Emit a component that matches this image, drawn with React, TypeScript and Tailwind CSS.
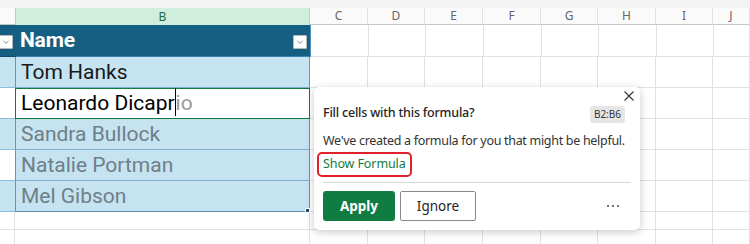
import React from "react";

const COLS = ["C", "D", "E", "F", "G", "H", "I", "J"];
const WIDTHS = ["w-[58px]", "w-[57px]", "w-[58px]", "w-[58px]", "w-[57px]", "w-[58px]", "w-[57px]", "flex-1"];

function PlainCells({ h }: { h: string }) {
  return (
    <>
      {COLS.map((c, i) => (
        <div key={c} className={`${WIDTHS[i]} ${h} shrink-0 border-r border-b border-[#e1e1e1] bg-white`} />
      ))}
    </>
  );
}

function Dropdown() {
  return (
    <div className="w-[14px] h-[14px] bg-white border border-[#b8b8b8] rounded-[1px] flex items-center justify-center">
      <svg width="8" height="6" viewBox="0 0 8 6">
        <path d="M1.5 2 L4 4.3 L6.5 2" fill="none" stroke="#7a7a7a" strokeWidth="0.9" />
      </svg>
    </div>
  );
}

const rows = [
  { a: "bg-[#c5e3f1]", text: "Tom Hanks", color: "text-[#1a1a1a]", active: false },
  { a: "bg-white", text: "Leonardo Dicapr", color: "text-black", active: true },
  { a: "bg-[#c5e3f1]", text: "Sandra Bullock", color: "text-[#6f7f88]", active: false },
  { a: "bg-white", text: "Natalie Portman", color: "text-[#6f7f88]", active: false },
  { a: "bg-[#c5e3f1]", text: "Mel Gibson", color: "text-[#6f7f88]", active: false },
];

export default function App() {
  return (
    <div className="relative w-[750px] h-[244px] overflow-hidden bg-white" style={{ fontFamily: "Roboto, 'Noto Sans', sans-serif" }}>
      {/* top band */}
      <div className="h-[8px] bg-[#f3f3f3]" />
      {/* column headers */}
      <div className="flex h-[17px]">
        <div className="w-[16px] shrink-0 bg-[#fafafa] border-r border-b border-[#c6c6c6]" />
        <div className="w-[294px] shrink-0 bg-[#cfeedd] border-r border-[#a9d8bd] flex items-center justify-center text-[12px] text-[#1e6b40]" style={{ fontFamily: "'Noto Sans', sans-serif" }}>B</div>
        {COLS.map((c, i) => (
          <div key={c} className={`${WIDTHS[i]} shrink-0 bg-[#fafafa] border-r border-b border-[#e1e1e1] border-b-[#c6c6c6] flex items-center justify-center text-[12px] text-[#666]`} style={{ fontFamily: "'Noto Sans', sans-serif" }}>{c}</div>
        ))}
      </div>
      {/* row 1 header */}
      <div className="flex h-[32px]">
        <div className="w-[16px] shrink-0 bg-[#156082] border-b border-[#0f4c69] flex items-center pt-[2px]">
          <div className="-ml-[1px]"><Dropdown /></div>
        </div>
        <div className="w-[294px] shrink-0 bg-[#156082] border-b border-[#3c84a8] flex items-center justify-between pl-[4px] pr-[3px]">
          <span className="text-white font-bold text-[21px] leading-none tracking-[-0.2px]">Name</span>
          <div className="mt-[3px]"><Dropdown /></div>
        </div>
        <div className="w-[1px] shrink-0 h-full bg-[#4e93c2]" />
        <div className="flex flex-1">
          <PlainCells h="h-[32px]" />
        </div>
      </div>
      {/* data rows */}
      {rows.map((r, idx) => (
        <div key={idx} className="flex h-[31px]">
          <div className={`w-[15px] shrink-0 ${r.a} border-b border-[#8ebcd6]`} />
          <div
            className={`w-[295px] shrink-0 flex items-center pl-[5px] pt-[1px] ${
              r.active ? "bg-white border border-[#107c41]" : "bg-[#c5e3f1] border-b border-[#7eb1cf] border-l border-l-[#6d94ab] border-r border-r-[#6d94ab]"
            } ${idx === 4 ? "border-b-[#5f8aa3]" : ""}`}
          >
            <span className={`text-[21px] leading-none whitespace-nowrap ${r.color}`}>
              {r.text}
              {r.active && (
                <>
                  <span className="inline-block w-[1px] h-[28px] bg-black align-middle -mt-[4px]" />
                  <span className="text-[#9a9a9a]">io</span>
                </>
              )}
            </span>
          </div>
          <div className="flex flex-1">
            <PlainCells h="h-[31px]" />
          </div>
        </div>
      ))}
      {/* row 7 and 8 */}
      {["h-[18px]", "h-[31px]"].map((h, i) => (
        <div key={i} className={`flex ${h}`}>
          <div className="w-[15px] shrink-0 border-r border-b border-[#e1e1e1]" />
          <div className="w-[295px] shrink-0 border-r border-b border-[#e1e1e1]" />
          <div className="flex flex-1">
            <PlainCells h={h} />
          </div>
        </div>
      ))}

      {/* fill handle */}
      <div className="absolute left-[305px] top-[208px] w-[5px] h-[5px] bg-[#1d4f70] border border-white" />

      {/* popup */}
      <div
        className="absolute left-[314px] top-[87px] w-[326px] h-[143px] bg-white rounded-[5px] shadow-[0_2px_8px_rgba(0,0,0,0.22)] flex flex-col pl-[9px] pr-[9px] pt-[17px] pb-[9px]"
        style={{ fontFamily: "'Noto Sans', sans-serif" }}
      >
        <svg className="absolute right-[4px] top-[2px]" width="14" height="14" viewBox="0 0 14 14">
          <path d="M2.5 2.5 L11.5 11.5 M11.5 2.5 L2.5 11.5" stroke="#333" strokeWidth="1.1" fill="none" />
        </svg>
        <div className="flex items-center justify-between h-[20px] pr-[6px]">
          <span className="text-[12.5px] text-[#242424] font-medium tracking-[-0.2px]">Fill cells with this formula?</span>
          <span className="bg-[#e6e6e6] rounded-[3px] px-[4px] h-[17px] flex items-center text-[10px] text-[#333] mt-[2px]">B2:B6</span>
        </div>
        <div className="mt-[9px] h-[20px] flex items-center text-[12.5px] text-[#333] tracking-[-0.3px] whitespace-nowrap">
          We've created a formula for you that might be helpful.
        </div>
        <div className="mt-[1px] -ml-[6px] flex">
          <span className="border-2 border-[#e0202a] rounded-[5px] px-[4px] h-[25px] flex items-center text-[12.5px] text-[#107c41] tracking-[-0.1px]">
            Show Formula
          </span>
        </div>
        <div className="mt-[5px] h-[1px] bg-[#d6d6d6]" />
        <div className="mt-[8px] flex items-center">
          <button className="w-[72px] h-[30px] bg-[#107c41] rounded-[3px] text-white font-bold text-[13.5px] flex items-center justify-center">Apply</button>
          <button className="ml-[5px] w-[76px] h-[30px] bg-white border border-[#8a8a8a] rounded-[2px] text-[#242424] text-[13.5px] flex items-center justify-center">Ignore</button>
          <div className="flex-1" />
          <div className="flex gap-[3px] mr-[12px]">
            <span className="w-[2px] h-[2px] bg-[#444] rounded-full" />
            <span className="w-[2px] h-[2px] bg-[#444] rounded-full" />
            <span className="w-[2px] h-[2px] bg-[#444] rounded-full" />
          </div>
        </div>
      </div>
    </div>
  );
}
